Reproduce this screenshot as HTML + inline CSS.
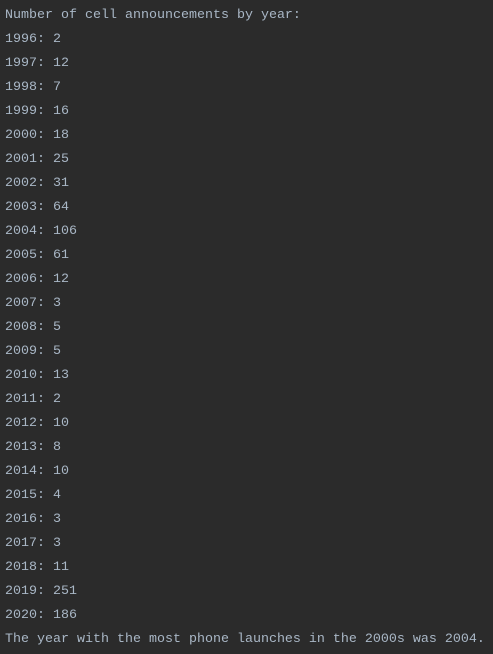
<!DOCTYPE html><html><head><style>
html,body{margin:0;background:#2b2b2b;width:493px;height:654px;overflow:hidden}
pre{margin:0;padding:4px 0 0 5px;font-family:"Liberation Mono",monospace;font-size:13.33px;line-height:24px;color:#a9b7c6}
</style></head><body><pre>Number of cell announcements by year:
1996: 2
1997: 12
1998: 7
1999: 16
2000: 18
2001: 25
2002: 31
2003: 64
2004: 106
2005: 61
2006: 12
2007: 3
2008: 5
2009: 5
2010: 13
2011: 2
2012: 10
2013: 8
2014: 10
2015: 4
2016: 3
2017: 3
2018: 11
2019: 251
2020: 186
The year with the most phone launches in the 2000s was 2004.</pre></body></html>
